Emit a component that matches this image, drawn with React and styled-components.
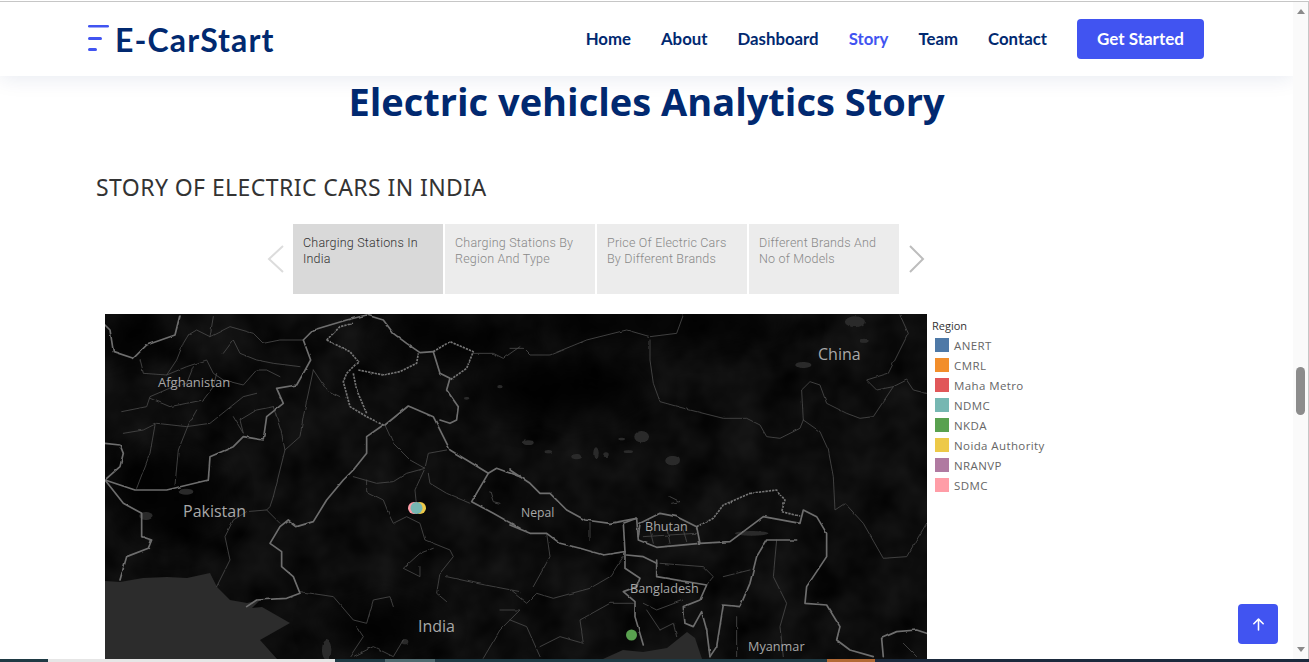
import styled, { createGlobalStyle } from "styled-components";
import { BsArrowUpShort } from "react-icons/bs";

const GlobalStyle = createGlobalStyle`
  html, body {
    margin: 0;
    height: 100%;
    overflow: hidden;
    background: #fff;
  }
  * { box-sizing: border-box; }
`;

const Frame = styled.div`
  position: relative;
  width: 1309px;
  height: 662px;
  padding-top: 1px;
  display: flex;
  flex-direction: column;
  overflow: hidden;
  font-family: Lato, sans-serif;
`;

const Window = styled.div`
  flex: 1;
  min-height: 0;
  display: flex;
  border-top: 1px solid #c6c6c6;
  border-right: 1px solid #c6c6c6;
`;

const Page = styled.div`
  flex: 1;
  min-width: 0;
  overflow: hidden;
`;

const Header = styled.header`
  position: relative;
  z-index: 2;
  height: 74px;
  padding: 0 89px 0 88px;
  display: flex;
  align-items: center;
  justify-content: space-between;
  background: #fff;
  box-shadow: 0 2px 20px rgba(1, 41, 112, 0.1);
`;

const Logo = styled.a`
  display: flex;
  align-items: center;
  gap: 6px;
  color: #012970;
  font-size: 32px;
  font-weight: 700;
  letter-spacing: 1.1px;
`;

const Nav = styled.nav`
  display: flex;
  align-items: center;
  gap: 30px;
`;

const NavLink = styled.a`
  padding-bottom: 2px;
  font-size: 16.8px;
  font-weight: 700;
  color: ${(p) => (p.$active ? "#4154f1" : "#012970")};
`;

const GetStarted = styled.a`
  width: 127px;
  height: 40px;
  padding-bottom: 2px;
  display: flex;
  align-items: center;
  justify-content: center;
  border-radius: 4px;
  background: #4154f1;
  color: #fff;
  font-size: 17px;
  font-weight: 700;
`;

const Title = styled.h1`
  margin: 0;
  height: 51px;
  text-align: center;
  color: #012970;
  font-family: "Open Sans", sans-serif;
  font-size: 38px;
  font-weight: 700;
  line-height: 51px;
`;

const StoryTitle = styled.h2`
  margin: 45px 0 0 96px;
  height: 30px;
  color: #333;
  font-family: "Noto Sans", sans-serif;
  font-size: 23px;
  font-weight: 400;
  letter-spacing: 0.42px;
  line-height: 30px;
`;

const TabRow = styled.div`
  margin: 22px 0 0 266px;
  height: 70px;
  display: flex;
  align-items: center;
`;

const Tabs = styled.div`
  margin: 0 8px;
  display: flex;
  gap: 2px;
`;

const Tab = styled.div`
  width: 150px;
  height: 70px;
  padding: 11px 10px;
  background: ${(p) => (p.$active ? "#d9d9d9" : "#ececec")};
  color: ${(p) => (p.$active ? "#333" : "#888")};
  font-family: Roboto, sans-serif;
  font-size: 12.5px;
  font-weight: 300;
  letter-spacing: 0.2px;
  line-height: 16px;
`;

const Chevron = styled.svg`
  width: 19px;
  height: 30px;
  flex: none;
`;

const MapRow = styled.div`
  margin: 20px 0 0 105px;
  display: flex;
  gap: 5px;
`;

const MapBox = styled.svg`
  display: block;
  width: 822px;
  height: 345px;
  flex: none;
  background: #0e0e0e;
`;

const MapLabel = styled.text`
  fill: #a8a8a8;
  font-family: "Open Sans", sans-serif;
  font-size: ${(p) => p.$size}px;
`;

const Legend = styled.div`
  padding-top: 5px;
`;

const LegendTitle = styled.div`
  height: 16px;
  color: #333;
  font-family: "Open Sans", sans-serif;
  font-size: 11px;
  line-height: 14px;
`;

const LegendRow = styled.div`
  margin-left: 3px;
  height: 20px;
  display: flex;
  align-items: center;
  gap: 5px;
  color: #666;
  font-family: "Open Sans", sans-serif;
  font-size: 11.5px;
  letter-spacing: 0.4px;
`;

const Swatch = styled.span`
  width: 14px;
  height: 14px;
  background: ${(p) => p.$color};
`;

const Scrollbar = styled.div`
  width: 15px;
  flex: none;
  padding: 7px 0 7px;
  display: flex;
  flex-direction: column;
  align-items: center;
  background: #fafafa;
`;

const ScrollArrow = styled.span`
  width: 0;
  height: 0;
  border-left: 4px solid transparent;
  border-right: 4px solid transparent;
  ${(p) => (p.$down ? "border-top: 5px solid #8a8a8a;" : "border-bottom: 5px solid #8a8a8a;")}
`;

const ScrollTrack = styled.div`
  flex: 1;
  padding-top: 353px;
`;

const ScrollThumb = styled.div`
  width: 9px;
  height: 48px;
  border-radius: 5px;
  background: #8c8c8c;
`;

const BackToTop = styled.a`
  position: absolute;
  left: 1238px;
  top: 604px;
  width: 40px;
  height: 40px;
  display: flex;
  align-items: center;
  justify-content: center;
  border-radius: 4px;
  background: #4154f1;
  color: #fff;
`;

const Taskbar = styled.div`
  height: 3px;
  flex: none;
  display: flex;
`;

const TaskSegment = styled.div`
  width: ${(p) => p.$width}px;
  flex: ${(p) => (p.$grow ? 1 : "none")};
  background: ${(p) => p.$color};
`;

const navItems = ["Home", "About", "Dashboard", "Story", "Team", "Contact"];

const tabs = [
  "Charging Stations In India",
  "Charging Stations By Region And Type",
  "Price Of Electric Cars By Different Brands",
  "Different Brands And No of Models",
];

const regions = [
  ["ANERT", "#4e79a7"],
  ["CMRL", "#f28e2b"],
  ["Maha Metro", "#e15759"],
  ["NDMC", "#76b7b2"],
  ["NKDA", "#59a14f"],
  ["Noida Authority", "#edc948"],
  ["NRANVP", "#b07aa1"],
  ["SDMC", "#ff9da7"],
];

const segments = [
  { width: 48, color: "#1f3a44" },
  { width: 287, color: "#e6e6e6" },
  { width: 50, color: "#1f3a44" },
  { width: 50, color: "#4f6a70" },
  { width: 392, color: "#1f3a44" },
  { width: 48, color: "#b26a35" },
  { grow: true, color: "#1b2a3d" },
];

// map lines, traced at 3x from the left half (origin 100,310)
const leftThick = [
  "15,45 30,60 40,125 100,145 140,105 225,75 240,15",
  "15,400 60,405 70,430 60,470 15,510 105,540 200,540 325,510 330,440 400,410 430,380 490,390 500,320 550,280 530,235 590,225 610,190 632,150 610,90 640,60 740,30 800,15 850,30 880,70 920,100 960,128 1000,125",
  "850,345 800,380 800,430 760,480 730,510 680,570 640,635 590,650 565,630 540,650 510,700 545,725 545,770 580,800 600,850 560,865 470,870 440,890",
  "15,510 70,580 125,610 125,680 155,690 145,715 80,740 60,810",
  "855,345 925,288 1000,320 1020,360 1050,420 1100,450 1165,490 1115,575 1180,610 1260,655",
  "1165,490 1190,475 1260,500",
  "1000,125 1020,190 1050,205 1040,240 1075,290 1070,330 1050,340 1020,330",
];

const leftDotted = [
  "680,90 720,50 760,40",
  "680,90 750,125 775,155 740,190 730,215 750,290 800,320 850,345",
  "775,180 850,195 900,185 950,160 955,130",
  "760,190 770,240 800,310",
  "1000,125 1050,95 1120,125 1100,175 1050,210",
];

const leftThin = [
  "120,150 130,190 200,195 230,150 250,100 265,75",
  "265,75 290,60 330,80 340,20",
  "330,80 390,50 460,70 490,100 540,90 610,90",
  "200,195 260,170 320,150 340,190 370,210 430,225 470,180 500,180 540,200",
  "370,130 400,90 420,130 470,150 520,160 600,170",
  "65,305 140,290 150,260 220,230 260,220 280,170",
  "150,265 210,290 260,280 310,270 340,230 350,190",
  "70,370 130,360 170,340 260,350 330,340 380,300 430,260 470,250",
  "110,535 150,430 165,345",
  "225,525 235,420 265,345 290,300",
  "400,320 430,370 420,330 470,300 520,290",
  "520,560 510,590 500,600 440,605 400,630 375,680 390,750 350,830",
  "500,600 540,640",
  "520,560 555,420 545,370 520,290",
  "555,420 600,380 610,320 640,180",
  "640,180 680,240 720,260",
  "760,500 830,520 880,515 920,490 975,475",
  "800,510 800,545 850,570 870,620 880,640 920,620 960,640 975,690 1000,700 1050,720 1060,740 1020,790 1010,850 1040,875",
  "975,475 945,540 950,590",
  "975,475 985,430 1040,420",
  "985,490 990,520 1040,550 1110,580",
  "1000,715 960,730 910,775 960,800 960,770",
  "600,845 700,860 760,930 800,940 820,870 870,860 880,890",
  "1040,800 1130,820 1260,845",
  "1200,900 1260,900 1200,960 1150,1045",
  "750,1040 790,980 770,950",
  "760,1040 820,1010 880,1040 910,990",
  "855,345 880,400 930,450 975,475",
  "1120,130 1180,130 1210,145 1260,110",
  "1170,545 1180,575 1200,580",
];

// same for the right half (origin 510,310)
const rightThick = [
  "0,480 60,520 90,550 120,550 170,600 225,630 300,640 380,625 385,690 440,712 570,700 660,695 760,620 870,640 880,600 920,620 950,670 950,740 890,830 885,880 950,885 990,950 980,990 1020,1020 1090,1040",
  "0,645 60,670 110,670 150,700 210,715 280,735 345,725 340,640 380,625",
  "385,680 390,640 450,610 500,620 560,650 570,700",
  "860,690 770,690 740,740 720,820 690,890 640,885 620,1010 600,1040",
  "345,725 345,775 390,805 380,830 340,845 375,875 375,920 400,1005",
  "440,750 440,800 590,825 570,870 520,890 525,940 550,950 575,905 590,960 600,1040",
  "350,735 400,740 440,760",
  "1120,1040 1115,985 1160,965 1220,960 1250,970",
];

const rightDotted = [
  "560,650 610,625 640,585 720,550 800,540 825,570 815,605 875,620",
];

const rightThin = [
  "1170,15 1195,70 1170,120 1135,190 1070,210 1100,240 1150,230 1190,210 1210,240 1250,250",
  "880,330 875,240 900,215 930,225 950,280 1010,310 1050,325 1090,320 1120,275 1150,230",
  "880,330 930,365 955,420 970,500 975,600 1005,580 1060,640 1120,745 1190,740 1250,640",
  "0,115 40,115 60,135 120,135 230,90 350,60 420,80 500,70 520,15",
  "420,90 420,150 430,220 450,275 540,300 640,325 710,325 750,345 770,380 810,385 870,355 880,330",
  "0,840 50,880 80,850 130,865 240,835 300,800 340,740",
  "110,670 120,740 70,830",
  "240,640 240,690",
  "90,1010 150,980 220,1000 210,930 300,880 370,880",
  "400,880 440,900 520,870",
  "410,900 450,960",
  "450,960 490,940 500,980",
  "0,930 50,950 90,1040",
  "450,760 580,770 610,800 590,825",
  "640,800 680,790 720,780",
  "800,690 790,800 830,880 810,950 820,1040",
  "680,920 680,1040",
  "420,660 430,700",
  "470,650 480,700",
  "520,660 530,695",
  "400,680 560,670",
  "480,560 510,575 485,580",
  "1180,1000 1220,1040",
];

const waterLeft = [
  [138, 618, 20, 12],
  [258, 545, 22, 9],
  [680, 1020, 14, 30],
  [915, 995, 10, 8],
  [1200, 230, 8, 5],
  [1100, 265, 8, 4],
];

const waterRight = [
  [1035, 35, 30, 16],
  [880, 165, 24, 9],
  [1062, 92, 14, 6],
  [395, 380, 22, 17],
  [335, 387, 10, 4],
  [200, 440, 16, 8],
  [258, 430, 8, 18],
  [288, 434, 8, 7],
  [355, 425, 14, 4],
  [488, 452, 22, 14],
  [115, 425, 11, 5],
  [55, 398, 16, 7],
  [725, 670, 50, 7],
];

const blackPatches = [
  { cx: 170, cy: 495, rx: 55, ry: 45 },
  { cx: 125, cy: 340, rx: 50, ry: 20 },
  { cx: 440, cy: 340, rx: 70, ry: 22 },
  { cx: 660, cy: 325, rx: 140, ry: 18 },
  { cx: 560, cy: 390, rx: 90, ry: 30 },
  { cx: 380, cy: 625, rx: 60, ry: 25 },
];

const labels = [
  { text: "Afghanistan", x: 158, y: 387, size: 13 },
  { text: "Pakistan", x: 183, y: 517, size: 16 },
  { text: "India", x: 418, y: 632, size: 16 },
  { text: "China", x: 818, y: 360, size: 16 },
  { text: "Nepal", x: 521, y: 517, size: 12.2 },
  { text: "Bhutan", x: 645, y: 531, size: 12.6 },
  { text: "Bangladesh", x: 630, y: 593, size: 12.7 },
  { text: "Myanmar", x: 748, y: 651, size: 12.7 },
];

function Lines({ items, color, width, dash }) {
  return items.map((points) => (
    <polyline
      key={points}
      points={points}
      fill="none"
      stroke={color}
      strokeWidth={width}
      strokeDasharray={dash}
      strokeLinejoin="round"
      strokeLinecap={dash ? "butt" : "round"}
    />
  ));
}

function Water({ items }) {
  return items.map(([cx, cy, rx, ry]) => (
    <ellipse key={`${cx}-${cy}`} cx={cx} cy={cy} rx={rx} ry={ry} fill="#2c2c2c" />
  ));
}

function IndiaMap() {
  return (
    <MapBox viewBox="105 314 822 345">
      <defs>
        <filter id="mottle" x="0" y="0" width="100%" height="100%" colorInterpolationFilters="sRGB">
          <feTurbulence type="fractalNoise" baseFrequency="0.025" numOctaves="3" seed="4" />
          <feColorMatrix values="0.11 0 0 0 -0.005  0.11 0 0 0 -0.005  0.11 0 0 0 -0.005  0 0 0 0 1" />
        </filter>
        <filter id="soft" x="-40%" y="-40%" width="180%" height="180%">
          <feGaussianBlur stdDeviation="14" />
        </filter>
        <filter id="wobble" x="-2%" y="-2%" width="104%" height="104%">
          <feTurbulence type="fractalNoise" baseFrequency="0.035" numOctaves="2" seed="9" />
          <feDisplacementMap in="SourceGraphic" scale="7" xChannelSelector="R" yChannelSelector="G" />
        </filter>
      </defs>
      <rect x="105" y="314" width="822" height="345" filter="url(#mottle)" />
      <g filter="url(#soft)" fill="#000" opacity="0.75">
        {blackPatches.map((s) => (
          <ellipse key={`${s.cx}-${s.cy}`} {...s} />
        ))}
      </g>
      <polygon
        points="105,581 120,582 143,578 167,577 187,578 210,573 217,587 230,600 247,603 260,600 252,608 262,607 290,623 260,640 277,659 105,659"
        fill="#2c2c2c"
      />
      <polygon
        points="603,659 623,650 643,652 667,648 687,632 695,638 702,659"
        fill="#2c2c2c"
      />
      <g transform="translate(100 310) scale(0.3333)" filter="url(#wobble)">
        <Water items={waterLeft} />
        <Lines items={leftThin} color="#484848" width={2.6} />
        <Lines items={leftThick} color="#6e6e6e" width={5} />
        <Lines items={leftDotted} color="#747474" width={5} dash="7 3" />
      </g>
      <g transform="translate(510 310) scale(0.3333)" filter="url(#wobble)">
        <Water items={waterRight} />
        <Lines items={rightThin} color="#484848" width={2.6} />
        <Lines items={rightThick} color="#6e6e6e" width={5} />
        <Lines items={rightDotted} color="#747474" width={5} dash="7 3" />
      </g>
      {labels.map((l) => (
        <MapLabel key={l.text} x={l.x} y={l.y} $size={l.size}>
          {l.text}
        </MapLabel>
      ))}
      <circle cx="420" cy="508" r="6" fill="#edc948" />
      <circle cx="414" cy="508" r="6" fill="#ff9da7" />
      <circle cx="416.5" cy="508" r="6" fill="#76b7b2" />
      <circle cx="631.5" cy="635" r="5.5" fill="#59a14f" />
    </MapBox>
  );
}

export default function App() {
  return (
    <>
      <GlobalStyle />
      <Frame>
        <Window>
          <Page>
            <Header>
              <Logo>
                <svg width="21" height="28" viewBox="0 0 21 28">
                  <g fill="#4154f1">
                    <rect x="0" y="0" width="21" height="2.6" rx="1.3" />
                    <rect x="0" y="12" width="14" height="3" rx="1.5" />
                    <rect x="0" y="23" width="9" height="3" rx="1.5" />
                  </g>
                </svg>
                E-CarStart
              </Logo>
              <Nav>
                {navItems.map((item) => (
                  <NavLink key={item} $active={item === "Story"}>
                    {item}
                  </NavLink>
                ))}
                <GetStarted>Get Started</GetStarted>
              </Nav>
            </Header>
            <main>
              <Title>Electric vehicles Analytics Story</Title>
              <StoryTitle>STORY OF ELECTRIC CARS IN INDIA</StoryTitle>
              <TabRow>
                <Chevron viewBox="0 0 19 30">
                  <polyline points="17,2 3,15 17,28" fill="none" stroke="#dcdcdc" strokeWidth="2" />
                </Chevron>
                <Tabs>
                  {tabs.map((tab, i) => (
                    <Tab key={tab} $active={i === 0}>
                      {tab}
                    </Tab>
                  ))}
                </Tabs>
                <Chevron viewBox="0 0 19 30">
                  <polyline points="3,2 16,15 3,28" fill="none" stroke="#bdbdbd" strokeWidth="2" />
                </Chevron>
              </TabRow>
              <MapRow>
                <IndiaMap />
                <Legend>
                  <LegendTitle>Region</LegendTitle>
                  {regions.map(([name, color]) => (
                    <LegendRow key={name}>
                      <Swatch $color={color} />
                      {name}
                    </LegendRow>
                  ))}
                </Legend>
              </MapRow>
            </main>
          </Page>
          <Scrollbar>
            <ScrollArrow />
            <ScrollTrack>
              <ScrollThumb />
            </ScrollTrack>
            <ScrollArrow $down />
          </Scrollbar>
        </Window>
        <Taskbar>
          {segments.map((s) => (
            <TaskSegment key={s.color + s.width} $width={s.width} $grow={s.grow} $color={s.color} />
          ))}
        </Taskbar>
        <BackToTop>
          <BsArrowUpShort size={25} />
        </BackToTop>
      </Frame>
    </>
  );
}
